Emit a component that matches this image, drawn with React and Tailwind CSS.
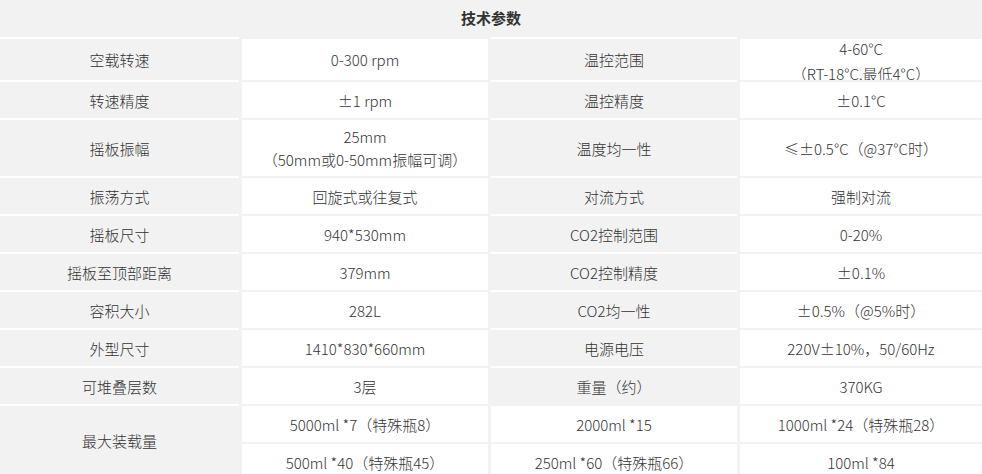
function Cell({ gray, h, children, className = "" }) {
  return (
    <div
      className={
        "flex flex-col items-center justify-center overflow-hidden border-t-2 text-center leading-[23px] " +
        (gray ? "bg-[#f2f2f2] border-white " : "bg-white border-[#f2f2f2] ") +
        h +
        " " +
        className
      }
    >
      {children}
    </div>
  );
}

function Row({ h, a, b, c, d }) {
  return (
    <>
      <Cell gray h={h}>{a}</Cell>
      <Cell h={h}>{b}</Cell>
      <Cell gray h={h}>{c}</Cell>
      <Cell h={h}>{d}</Cell>
    </>
  );
}

export default function App() {
  return (
    <div
      className="w-[982px] h-[474px] overflow-hidden bg-[#f2f2f2] text-[15px] font-light text-[#333]"
      style={{ fontFamily: '"Noto Sans CJK SC", "Noto Sans", sans-serif' }}
    >
      <div className="flex h-[37px] items-center justify-center font-bold">技术参数</div>
      <div className="grid grid-cols-[239px_246px_246px_242px] gap-x-[3px]">
        <Row
          h="h-[43px]"
          a="空载转速"
          b="0-300 rpm"
          c="温控范围"
          d={
            <div className="leading-[25px] pt-[2px]">
              <div>4-60°C</div>
              <div>（RT-18°C,最低4°C）</div>
            </div>
          }
        />
        <Row h="h-[38px]" a="转速精度" b="±1 rpm" c="温控精度" d="±0.1°C" />
        <Row
          h="h-[58px]"
          a="摇板振幅"
          b={
            <>
              <div>25mm</div>
              <div>（50mm或0-50mm振幅可调）</div>
            </>
          }
          c="温度均一性"
          d="≤±0.5°C（@37°C时）"
        />
        <Row h="h-[38px]" a="振荡方式" b="回旋式或往复式" c="对流方式" d="强制对流" />
        <Row h="h-[38px]" a="摇板尺寸" b="940*530mm" c="CO2控制范围" d="0-20%" />
        <Row h="h-[38px]" a="摇板至顶部距离" b="379mm" c="CO2控制精度" d="±0.1%" />
        <Row h="h-[38px]" a="容积大小" b="282L" c="CO2均一性" d="±0.5%（@5%时）" />
        <Row h="h-[38px]" a="外型尺寸" b="1410*830*660mm" c="电源电压" d="220V±10%，50/60Hz" />
        <Row h="h-[38px]" a="可堆叠层数" b="3层" c="重量（约）" d="370KG" />
        <Cell gray h="h-[76px] row-span-2" className="pb-[6px]">最大装载量</Cell>
        <Cell h="h-[38px]">5000ml *7（特殊瓶8）</Cell>
        <Cell h="h-[38px]">2000ml *15</Cell>
        <Cell h="h-[38px]">1000ml *24（特殊瓶28）</Cell>
        <Cell h="h-[38px]">500ml *40（特殊瓶45）</Cell>
        <Cell h="h-[38px]">250ml *60（特殊瓶66）</Cell>
        <Cell h="h-[38px]">100ml *84</Cell>
      </div>
    </div>
  );
}
